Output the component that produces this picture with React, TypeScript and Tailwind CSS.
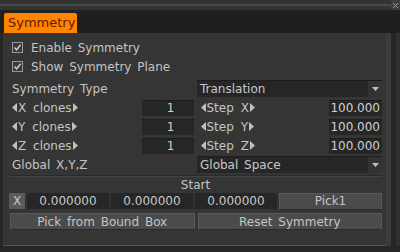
import React from "react";

const font = { fontFamily: '"DejaVu Sans", Verdana, sans-serif' };

function Check({ label }: { label: string }) {
  return (
    <div className="flex items-center h-[19px] pl-[9px] gap-[8px]">
      <div className="w-[11px] h-[11px] border border-[#9a9a9a] bg-[#3a3a3a] flex items-center justify-center">
        <svg width="9" height="9" viewBox="0 0 9 9">
          <path d="M1.5 4.5 L3.6 6.8 L7.6 1.8" stroke="#d0d0d0" strokeWidth="1.4" fill="none" />
        </svg>
      </div>
      <span className="text-[12px] text-[#c4c4c4] [word-spacing:2px]">{label}</span>
    </div>
  );
}

function Arrow({ dir }: { dir: "l" | "r" }) {
  return (
    <svg width="5" height="9" viewBox="0 0 5 9" className="shrink-0">
      {dir === "l" ? <path d="M5 0 L0 4.5 L5 9 Z" fill="#c0c0c0" /> : <path d="M0 0 L5 4.5 L0 9 Z" fill="#c0c0c0" />}
    </svg>
  );
}

function Spin({ label, value, w, center }: { label: string; value: string; w: string; center?: boolean }) {
  return (
    <div className="flex items-center flex-1 h-[19px]">
      <div className="flex items-center gap-[1px] flex-1 pl-[3px] text-[12px] text-[#c4c4c4] [word-spacing:3px]">
        <Arrow dir="l" />
        <span>{label}</span>
        <Arrow dir="r" />
      </div>
      <div
        className={`${w} h-[16px] bg-[#262626] border-t border-[#1c1c1c] flex items-center ${center ? "justify-center pl-[6px]" : "justify-end pr-[2px]"} text-[12px] text-[#d0d0d0]`}
      >
        {value}
      </div>
    </div>
  );
}

function Drop({ label, value }: { label: string; value: string }) {
  return (
    <div className="flex items-center h-[19px] gap-[4px]">
      <div className="w-[184px] text-[12px] text-[#c4c4c4] [word-spacing:2px] pl-[3px]">{label}</div>
      <div className="flex-1 h-[17px] flex items-center bg-[#262626] border-t border-[#1c1c1c]">
        <span className="flex-1 pl-[3px] text-[12px] text-[#c8c8c8] [word-spacing:2px]">{value}</span>
        <div className="w-[14px] h-full bg-[#333333] flex items-center justify-center">
          <svg width="7" height="4" viewBox="0 0 7 4">
            <path d="M0 0 L7 0 L3.5 4 Z" fill="#c0c0c0" />
          </svg>
        </div>
      </div>
    </div>
  );
}

function Btn({ children, className }: { children: React.ReactNode; className?: string }) {
  return (
    <div
      className={`h-[17px] flex items-center justify-center bg-[#4b4b4b] border border-[#5a5a5a] border-b-[#2a2a2a] text-[12px] text-[#c4c4c4] [word-spacing:2px] ${className ?? ""}`}
    >
      {children}
    </div>
  );
}

export default function App() {
  return (
    <div className="w-[400px] h-[252px] bg-[#2a2a2a] flex flex-col overflow-hidden" style={font}>
      <div className="h-[13px] shrink-0 bg-[#333333] border-b-[3px] border-[#222222] flex">
        <div className="flex-1 flex flex-col">
          <div className="h-[4px]" />
          <div className="h-[2px] bg-[#4a4a4a]" />
        </div>
        <div className="w-[9px] bg-[#3d3d3d] flex items-center justify-center">
          <svg width="5" height="5" viewBox="0 0 5 5">
            <path d="M0 0 L5 5 M5 0 L0 5" stroke="#9a9a9a" strokeWidth="1" />
          </svg>
        </div>
      </div>
      <div className="h-[20px] shrink-0 bg-[#1f1f1f] flex items-end pl-[4px]">
        <div className="w-[73px] h-[20px] bg-[#ff8500] rounded-t-[2px] pl-[4px] flex items-center text-[13px] text-[#6a1800]">
          Symmetry
        </div>
      </div>
      <div className="flex flex-1">
        <div className="w-[3px] bg-[#262626]" />
        <div className="flex-1 bg-[#353535] flex flex-col pt-[5px] border-b border-[#555555]">
          <Check label="Enable Symmetry" />
          <Check label="Show Symmetry Plane" />
          <div className="pl-[6px] pr-[4px] pt-[3px] flex flex-col">
            <Drop label="Symmetry Type" value="Translation" />
            <div className="flex gap-[4px]">
              <Spin label="X clones" value="1" w="w-[52px]" center />
              <Spin label="Step X" value="100.000" w="w-[53px]" />
            </div>
            <div className="flex gap-[4px]">
              <Spin label="Y clones" value="1" w="w-[52px]" center />
              <Spin label="Step Y" value="100.000" w="w-[53px]" />
            </div>
            <div className="flex gap-[4px]">
              <Spin label="Z clones" value="1" w="w-[52px]" center />
              <Spin label="Step Z" value="100.000" w="w-[53px]" />
            </div>
            <Drop label="Global X,Y,Z" value="Global Space" />
            <div className="h-[1px] bg-[#2a2a2a] mt-[1px]" />
            <div className="h-[1px] bg-[#444444]" />
            <div className="h-[15px] flex items-center justify-center text-[12px] text-[#c4c4c4]">Start</div>
            <div className="flex items-center gap-[2px] h-[18px]">
              <div className="w-[16px] h-[16px] bg-[#5a5a5a] flex items-center justify-center text-[12px] text-[#c8c8c8]">X</div>
              <div className="w-[82px] h-[16px] bg-[#262626] flex items-center justify-center text-[12px] text-[#c8c8c8]">0.000000</div>
              <div className="w-[82px] h-[16px] bg-[#262626] flex items-center justify-center text-[12px] text-[#c8c8c8]">0.000000</div>
              <div className="w-[82px] h-[16px] bg-[#262626] flex items-center justify-center text-[12px] text-[#c8c8c8]">0.000000</div>
              <Btn className="flex-1">Pick1</Btn>
            </div>
            <div className="flex gap-[3px] pl-[1px] mt-[3px]">
              <Btn className="flex-1">Pick from Bound Box</Btn>
              <Btn className="flex-1">Reset Symmetry</Btn>
            </div>
          </div>
        </div>
        <div className="w-[5px] bg-[#3c3c3c]" />
        <div className="w-[5px] bg-[#262626]" />
        <div className="w-[4px] bg-[#303030]" />
      </div>
      <div className="h-[6px] shrink-0 bg-[#262626]" />
    </div>
  );
}
